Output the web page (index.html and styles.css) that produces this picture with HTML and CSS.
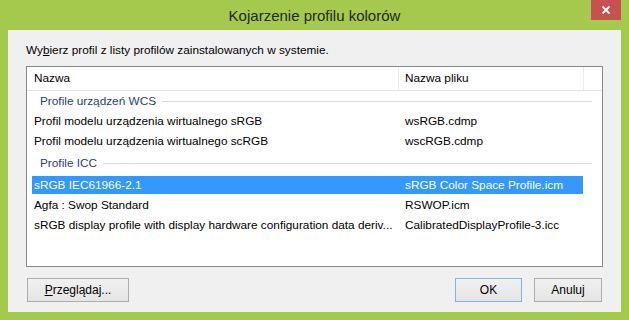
FILE: index.html
```html
<!DOCTYPE html>
<html lang="pl">
<head>
    <meta charset="UTF-8">
    <title>Kojarzenie profilu kolorów</title>
    <link rel="stylesheet" href="styles.css">
</head>
<body>
    <div class="window">
        <div class="titlebar">
            <span class="title">Kojarzenie profilu kolorów</span>
            <button class="close" title="Zamknij">
                <svg width="10" height="10" viewBox="0 0 10 10">
                    <path d="M1.5 1.5 L8.5 8.5 M8.5 1.5 L1.5 8.5" stroke="#fff" stroke-width="1.8" fill="none"/>
                </svg>
            </button>
        </div>
        <div class="content">
            <p class="prompt">Wy<u>b</u>ierz profil z listy profilów zainstalowanych w systemie.</p>
            <div class="list">
                <div class="list-header">
                    <div class="col-name">Nazwa</div>
                    <div class="col-file">Nazwa pliku</div>
                    <div class="col-fill"></div>
                </div>
                <div class="group"><span>Profile urządzeń WCS</span></div>
                <div class="row">
                    <span class="c1">Profil modelu urządzenia wirtualnego sRGB</span>
                    <span class="c2">wsRGB.cdmp</span>
                </div>
                <div class="row">
                    <span class="c1">Profil modelu urządzenia wirtualnego scRGB</span>
                    <span class="c2">wscRGB.cdmp</span>
                </div>
                <div class="group tall"><span>Profile ICC</span></div>
                <div class="row selected">
                    <span class="c1">sRGB IEC61966-2.1</span>
                    <span class="c2">sRGB Color Space Profile.icm</span>
                </div>
                <div class="row">
                    <span class="c1">Agfa : Swop Standard</span>
                    <span class="c2">RSWOP.icm</span>
                </div>
                <div class="row">
                    <span class="c1">sRGB display profile with display hardware configuration data deriv...</span>
                    <span class="c2">CalibratedDisplayProfile-3.icc</span>
                </div>
            </div>
            <div class="buttons">
                <button class="btn browse"><u>P</u>rzeglądaj...</button>
                <div class="spacer"></div>
                <button class="btn ok">OK</button>
                <button class="btn cancel">Anuluj</button>
            </div>
        </div>
    </div>
</body>
</html>
```

FILE: styles.css
```css
body {
    margin: 0;
    font-family: "Liberation Sans", Arial, sans-serif;
    font-size: 11.8px;
    color: #000;
}
.window {
    width: 629px;
    height: 320px;
    box-sizing: border-box;
    background-color: #a5c94c;
    display: flex;
    flex-direction: column;
    overflow: hidden;
}
.titlebar {
    height: 30px;
    display: grid;
    grid-template-columns: 1fr auto 1fr;
}
.title {
    grid-column: 2;
    font-size: 15px;
    line-height: 32px;
    color: #1e2a10;
}
.close {
    grid-column: 3;
    justify-self: end;
    align-self: start;
    width: 30px;
    height: 20px;
    margin-right: 8px;
    padding: 0;
    border: none;
    background-color: #c75050;
    display: flex;
    align-items: center;
    justify-content: center;
}
.content {
    flex: 1;
    margin: 0 8px 8px;
    padding: 12px 18px 10px;
    background-color: #f0f0f0;
    display: flex;
    flex-direction: column;
}
.prompt {
    margin: 0 0 8px;
    line-height: 16px;
}
.list {
    height: 201px;
    box-sizing: border-box;
    border: 1px solid #828790;
    background-color: #fff;
}
.list-header {
    height: 23px;
    display: flex;
    border-bottom: 1px solid #e5e5e5;
}
.list-header div {
    box-sizing: border-box;
    line-height: 22px;
}
.col-name {
    width: 372px;
    padding-left: 7px;
    border-right: 1px solid #ececec;
}
.col-file {
    width: 185px;
    padding-left: 6px;
    border-right: 1px solid #ececec;
}
.col-fill {
    flex: 1;
}
.group {
    height: 20px;
    display: flex;
    align-items: center;
    padding-left: 13px;
    padding-right: 10px;
    color: #1e3c8f;
}
.group.tall {
    height: 24px;
}
.group::after {
    content: "";
    flex: 1;
    height: 1px;
    margin-left: 6px;
    background-color: #dcdcdc;
}
.row {
    width: 551px;
    height: 20px;
    box-sizing: border-box;
    margin-left: 5px;
    padding: 1px 0;
    display: flex;
    background-clip: content-box;
    line-height: 18px;
}
.row.selected {
    background-color: #3399ff;
    color: #fff;
}
.c1 {
    width: 366px;
    box-sizing: border-box;
    padding-left: 2px;
    white-space: nowrap;
    overflow: hidden;
    text-overflow: ellipsis;
}
.c2 {
    flex: 1;
    padding-left: 7px;
    white-space: nowrap;
}
.buttons {
    margin-top: 11px;
    display: flex;
}
.spacer {
    flex: 1;
}
.btn {
    height: 24px;
    padding: 0;
    border: 1px solid #acacac;
    background: linear-gradient(#f0f0f0, #e5e5e5);
    font-family: inherit;
    font-size: 12px;
    color: #000;
}
.browse {
    width: 102px;
    margin-left: 1px;
}
.ok {
    width: 67px;
    border-color: #7eb4ea;
}
.cancel {
    width: 68px;
    margin-left: 12px;
    margin-right: 1px;
}
```
